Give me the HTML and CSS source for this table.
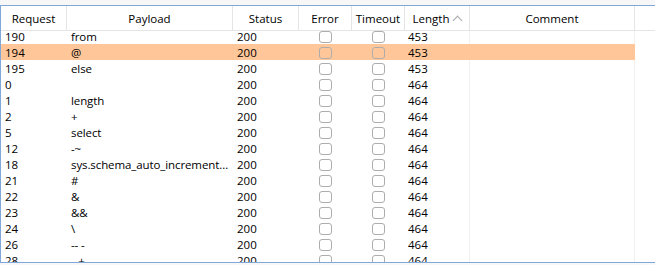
FILE: index.html
```html
<!DOCTYPE html>
<html lang="en">
<head>
  <meta charset="UTF-8" />
  <title>Intruder results</title>
  <link rel="stylesheet" href="styles.css">
</head>
<body>

  <div class="results">
    <div class="head">
      <div class="th">Request</div>
      <div class="th">Payload</div>
      <div class="th">Status</div>
      <div class="th">Error</div>
      <div class="th">Timeout</div>
      <div class="th">Length <span class="sort"></span></div>
      <div class="th">Comment</div>
      <div class="th filler"></div>
    </div>

    <div class="body">
      <div class="rows" id="rows"></div>
    </div>
  </div>

  <script>
    const results = [
      ["190", "from", 453],
      ["194", "@", 453, true],
      ["195", "else", 453],
      ["0", "", 464],
      ["1", "length", 464],
      ["2", "+", 464],
      ["5", "select", 464],
      ["12", "-~", 464],
      ["18", "sys.schema_auto_increment_columns", 464],
      ["21", "#", 464],
      ["22", "&", 464],
      ["23", "&&", 464],
      ["24", "\\", 464],
      ["26", "-- -", 464],
      ["28", "--+", 464]
    ];

    const esc = s => s.replace(/&/g, "&amp;").replace(/</g, "&lt;");

    document.getElementById("rows").innerHTML = results.map(([req, payload, len, sel]) => `
      <div class="row${sel ? " selected" : ""}">
        <div class="td">${req}</div>
        <div class="td payload">${esc(payload)}</div>
        <div class="td">200</div>
        <div class="td check"><span class="box"></span></div>
        <div class="td check"><span class="box"></span></div>
        <div class="td length">${len}</div>
        <div class="td comment"></div>
      </div>`).join("");
  </script>

</body>
</html>
```

FILE: styles.css
```css
body {
  margin: 0;
  background: #f7f7f7;
  font-family: 'Open Sans', sans-serif;
  font-size: 11.5px;
  color: #000;
}

.results {
  margin-top: 5px;
  height: 258px;
  box-sizing: border-box;
  border: 1px solid #7fa7d9;
  border-right: none;
  background: #fff;
  display: flex;
  flex-direction: column;
  overflow: hidden;
}

.head,
.row {
  display: grid;
  grid-template-columns: 66px 166px 66px 53px 53px 65px 165px;
}

.head {
  grid-template-columns: 66px 166px 66px 53px 53px 65px 165px 1fr;
  height: 25px;
  border-bottom: 1px solid #e5e5e5;
  box-sizing: border-box;
  position: relative;
  z-index: 1;
  background: #fff;
}

.th {
  border-right: 1px solid #e5e5e5;
  display: flex;
  align-items: center;
  justify-content: center;
  white-space: nowrap;
}

.th.filler {
  border-right: none;
}

.sort {
  display: inline-block;
  width: 6px;
  height: 6px;
  margin-left: 5px;
  margin-top: 5px;
  border-left: 1px solid #a8a8a8;
  border-top: 1px solid #a8a8a8;
  transform: rotate(45deg);
}

.body {
  flex: 1;
  overflow: hidden;
}

/* list is scrolled a few pixels, first row tucks under the header */
.rows {
  margin-top: -3px;
  width: 634px;
}

.row {
  height: 16px;
  line-height: 17px;
}

.row.selected {
  background: #ffc799;
}

.td {
  padding-left: 4px;
  white-space: nowrap;
  overflow: hidden;
  text-overflow: ellipsis;
}

.td.payload {
  padding-right: 2px;
  letter-spacing: -0.1px;
}

.td.length {
  padding-left: 3px;
  border-right: 1px solid #f0f0f0;
}

.td.comment {
  border-right: 1px solid #f0f0f0;
}

.row.selected .td.length,
.row.selected .td.comment {
  border-right-color: #ffc799;
}

.td.check {
  padding: 0;
  display: flex;
  align-items: center;
  justify-content: center;
}

.box {
  width: 11px;
  height: 10px;
  margin: 2px 0 0 -1px;
  border: 1px solid #adadad;
  border-radius: 3px;
}
```
